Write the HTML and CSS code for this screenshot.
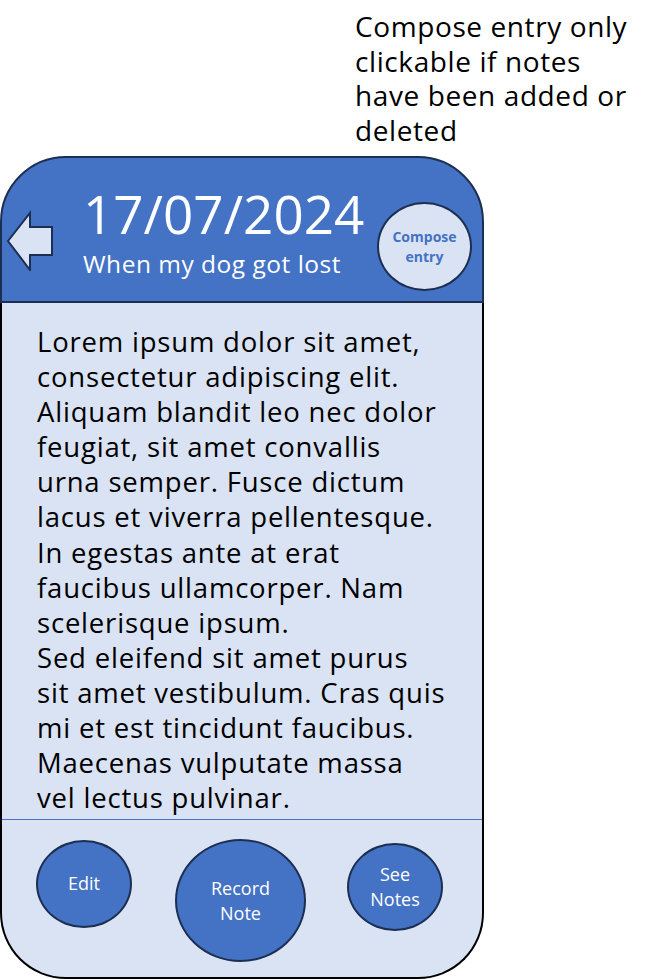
FILE: index.html
```html
<!DOCTYPE html>
<html lang="en">
<head>
<meta charset="utf-8">
<title>Journal entry</title>
<link rel="stylesheet" href="styles.css">
</head>
<body>
<div class="page">
  <p class="note">Compose entry only<br>clickable if notes<br>have been added or<br>deleted</p>
  <div class="phone">
    <header class="head">
      <svg class="back" width="48" height="62" viewBox="0 0 48 62" aria-hidden="true">
        <path d="M2 32 L24 4 L24 18 L46 18 L46 46 L24 46 L24 61 Z" fill="#dae3f3" stroke="#1c2f52" stroke-width="2" stroke-linejoin="miter"/>
      </svg>
      <div class="titles">
        <div class="date">17/07/2024</div>
        <div class="sub">When my dog got lost</div>
      </div>
      <div class="compose">Compose<br>entry</div>
    </header>
    <main class="body">
      <div class="text">
        <p>Lorem ipsum dolor sit amet,<br>consectetur adipiscing elit.<br>Aliquam blandit leo nec dolor<br>feugiat, sit amet convallis<br>urna semper. Fusce dictum<br>lacus et viverra pellentesque.<br>In egestas ante at erat<br>faucibus ullamcorper. Nam<br>scelerisque ipsum.</p>
        <p>Sed eleifend sit amet purus<br>sit amet vestibulum. Cras quis<br>mi et est tincidunt faucibus.<br>Maecenas vulputate massa<br>vel lectus pulvinar.</p>
      </div>
      <footer class="actions">
        <div class="btn btn-edit">Edit</div>
        <div class="btn btn-record">Record<br>Note</div>
        <div class="btn btn-see">See<br>Notes</div>
      </footer>
    </main>
  </div>
</div>
</body>
</html>
```
FILE: styles.css
```css
* { box-sizing: border-box; }
html, body { margin: 0; padding: 0; background: #fff; }
body { font-family: "Open Sans", "Noto Sans", sans-serif; color: #000; }

.page { width: 660px; height: 979px; padding: 9px 0 0 0; }

.note {
  margin: 0 0 0 355px;
  font-size: 28px;
  line-height: 34.5px;
  letter-spacing: 0.6px;
  height: 147px;
}

.phone { width: 484px; display: flex; flex-direction: column; }

.head {
  height: 147px;
  background: #4472c4;
  border: 2px solid #1c2f52;
  border-radius: 66px 66px 0 0;
  display: flex;
  align-items: flex-start;
  color: #fff;
}
.back { margin: 51px 0 0 4px; flex: none; }
.titles { margin: 28px 0 0 29px; width: 294px; flex: none; }
.date { font-size: 53px; line-height: 56px; }
.sub { font-size: 24.5px; line-height: 30px; margin-top: 7px; letter-spacing: 0.5px; }
.compose {
  flex: none;
  width: 95px; height: 89px;
  margin: 44px 0 0 0;
  border-radius: 50%;
  background: #dae3f3;
  border: 2px solid #1c2f52;
  color: #4472c4;
  font-weight: 700;
  font-size: 14px;
  line-height: 20px;
  display: flex; align-items: center; justify-content: center; text-align: center;
}

.body {
  height: 676px;
  background: #dae3f3;
  border: 2px solid #000;
  border-top: none;
  border-radius: 0 0 66px 66px;
  display: flex; flex-direction: column;
}
.text { padding: 21px 0 0 35px; height: 517px; border-bottom: 1px solid #4472c4; }
.text p { margin: 0; font-size: 27.5px; line-height: 35.1px; letter-spacing: 0.8px; }

.actions { display: flex; align-items: flex-start; padding-left: 34px; }
.btn {
  flex: none;
  border-radius: 50%;
  background: #4472c4;
  border: 2px solid #1c2f52;
  color: #fff;
  font-size: 18px;
  line-height: 25px;
  display: flex; align-items: center; justify-content: center; text-align: center;
}
.btn-edit { width: 96px; height: 88px; margin-top: 20px; padding-bottom: 1px; }
.btn-record { width: 131px; height: 123px; margin: 19px 0 0 43px; }
.btn-see { width: 96px; height: 88px; margin: 23px 0 0 41px; }
```
